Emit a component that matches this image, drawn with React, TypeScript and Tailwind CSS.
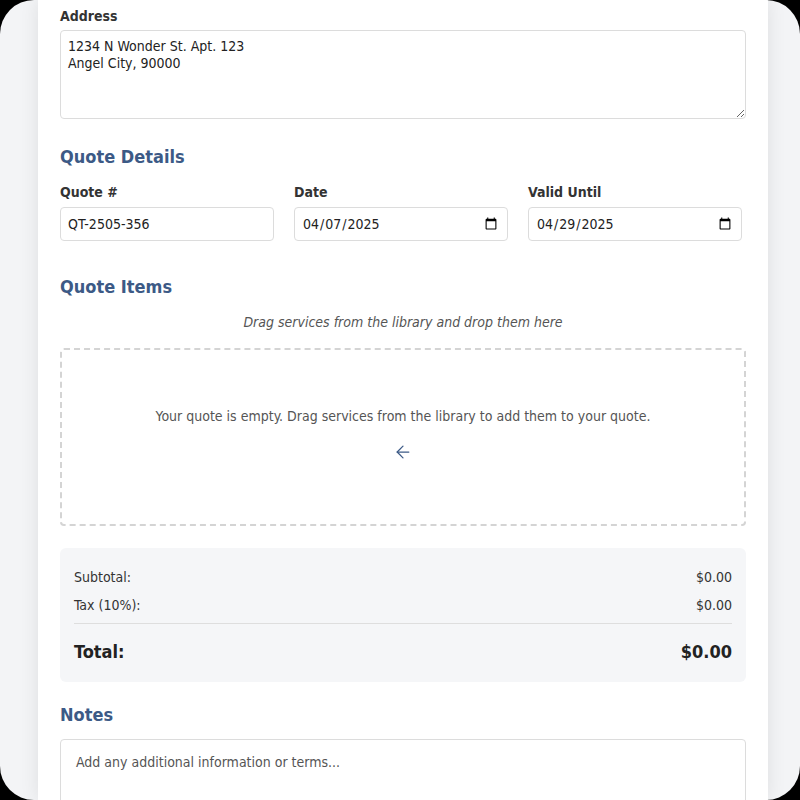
import { ArrowLeft } from "lucide-react";

const font = { fontFamily: '"DejaVu Sans Condensed", "DejaVu Sans", sans-serif' };

const Heading = ({ children, className = "" }: { children: string; className?: string }) => (
  <h2 className={`text-[18px] leading-[24px] font-bold text-[#3c5a86] ${className}`}>{children}</h2>
);

const Label = ({ children }: { children: string }) => (
  <label className="block text-[14px] leading-[20px] font-bold text-[#333] mb-[5px]">{children}</label>
);

const inputCls =
  "w-full h-[34px] rounded-[4px] border border-[#dcdcdc] bg-white px-[7px] text-[14px] text-[#222] outline-none";

export default function App() {
  return (
    <div className="w-[800px] h-[800px] bg-black overflow-hidden" style={font}>
      <div className="h-full rounded-[34px] bg-[#f3f4f6] overflow-hidden px-[38px]">
        <div className="h-full w-[730px] bg-white px-[22px] pt-[6px] shadow-[0_0_18px_rgba(0,0,0,0.09)]">
          <label className="block text-[14px] leading-[20px] font-bold text-[#333] mb-1">Address</label>
          <textarea
            className="block w-full h-[89px] rounded-[4px] border border-[#dcdcdc] px-[7px] pt-[7px] pb-[5px] text-[14px] leading-[17px] text-[#222] outline-none"
            defaultValue={"1234 N Wonder St. Apt. 123\nAngel City, 90000"}
          />

          <Heading className="mt-[26px]">Quote Details</Heading>
          <div className="grid grid-cols-3 gap-5 mt-[13px] pr-1">
            <div>
              <Label>Quote #</Label>
              <input className={inputCls} defaultValue="QT-2505-356" />
            </div>
            <div>
              <Label>Date</Label>
              <input type="date" className={inputCls} defaultValue="2025-04-07" />
            </div>
            <div>
              <Label>Valid Until</Label>
              <input type="date" className={inputCls} defaultValue="2025-04-29" />
            </div>
          </div>

          <Heading className="mt-[34px]">Quote Items</Heading>
          <p className="mt-[13px] text-center italic text-[14px] leading-[20px] text-[#555]">
            Drag services from the library and drop them here
          </p>
          <div className="mt-4 h-[178px] rounded-[4px] border-2 border-dashed border-[#d4d4d4] flex flex-col items-center pt-[56px]">
            <p className="text-[14px] leading-[20px] text-[#555]">
              Your quote is empty. Drag services from the library to add them to your quote.
            </p>
            <ArrowLeft className="mt-[16px] w-5 h-5 text-[#3c5a86]" strokeWidth={1.5} />
          </div>

          <div className="mt-[22px] rounded-[6px] bg-[#f5f6f8] px-[14px] pt-[15px] pb-4 text-[14px] text-[#333]">
            <div className="h-[28px] flex items-center justify-between">
              <span>Subtotal:</span>
              <span>$0.00</span>
            </div>
            <div className="h-[28px] flex items-center justify-between">
              <span>Tax (10%):</span>
              <span>$0.00</span>
            </div>
            <div className="mt-1 border-t border-[#dedede]" />
            <div className="mt-3 h-[30px] flex items-center justify-between text-[18px] font-bold text-[#222]">
              <span>Total:</span>
              <span>$0.00</span>
            </div>
          </div>

          <Heading className="mt-[21px]">Notes</Heading>
          <textarea
            className="mt-3 block w-full h-[100px] rounded-[4px] border border-[#dcdcdc] px-[15px] py-3 text-[14px] leading-[20px] text-[#222] placeholder:text-[#555] outline-none"
            placeholder="Add any additional information or terms..."
          />
        </div>
      </div>
    </div>
  );
}
